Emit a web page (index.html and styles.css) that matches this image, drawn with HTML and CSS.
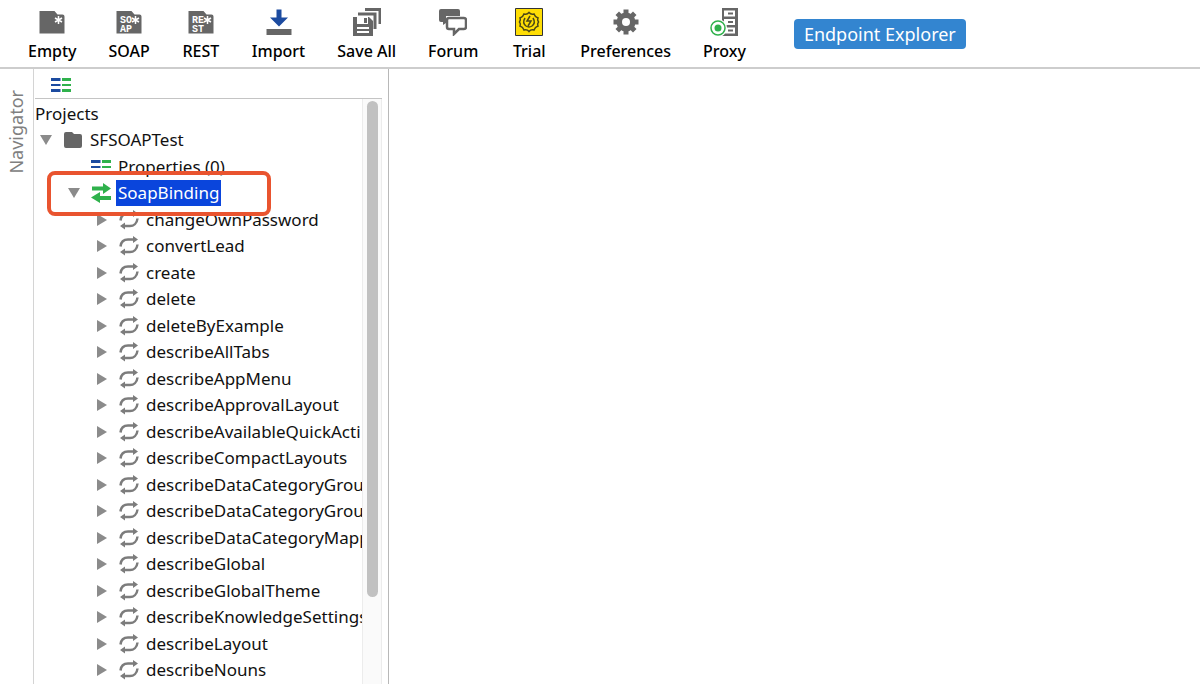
FILE: index.html
```html
<!DOCTYPE html>
<html lang="en">
<head>
<meta charset="utf-8">
<meta name="viewport" content="width=device-width, initial-scale=1">
<title>SFSOAPTest</title>
<link rel="stylesheet" href="styles.css">
</head>
<body>
<svg class="defs" aria-hidden="true">
  <symbol id="i-doc" viewBox="0 0 28 28">
    <path class="gray" d="M1.500 3h15l3 3.500h5q2 0 2 2V25.500h-25z"/>
    <path class="white-line" d="M20.500 8v8M17 10l7 4M17 14l7-4"/>
  </symbol>
  <symbol id="i-props" viewBox="0 0 20 16">
    <path class="navy" d="M0 1h9.500v3H0zM0 7h9.500v2H0zM0 12h9.500v3H0z"/>
    <path class="green" d="M11 1h9v3h-9zM11 7h9v2h-9zM11 12h9v3h-9z"/>
  </symbol>
  <symbol id="i-folder" viewBox="0 0 20 18">
    <path class="gray" d="M1 3q0-2 2-2h6l2 2h6q2 0 2 2v10q0 2-2 2H3q-2 0-2-2z"/>
  </symbol>
  <symbol id="i-binding" viewBox="0 0 20 20">
    <path class="green" d="M1 3.500h11V0l8 5.500-8 5.500V7.500H1zM20 13H9V9L0 14.500 9 20v-3h11z"/>
  </symbol>
  <symbol id="i-op" viewBox="0 0 20 20">
    <path class="op-line" d="M1.500 10.500C2 6 5 3.500 9 3.500h6M18.500 8.500c-.500 5-4 7.500-7.500 7.500H5"/>
    <path class="op-fill" d="M14 0l5 3.500-5 3.500zM6 12.500L1 16l5 3.500z"/>
  </symbol>
  <symbol id="i-open" viewBox="0 0 12 12"><path class="arrow" d="M0 1h12L6 11z"/></symbol>
  <symbol id="i-closed" viewBox="0 0 12 12"><path class="arrow" d="M1 0v12l10-6z"/></symbol>
</svg>

<header class="toolbar">
  <nav class="tools" aria-label="Main toolbar">
    <button class="tool" type="button"><svg class="tool-icon" viewBox="0 0 28 28"><use href="#i-doc"/></svg>Empty</button>
    <button class="tool" type="button"><svg class="tool-icon" viewBox="0 0 28 28"><use href="#i-doc"/><text class="badge" x="5" y="15">SO</text><text class="badge" x="5" y="24">AP</text></svg>SOAP</button>
    <button class="tool" type="button"><svg class="tool-icon" viewBox="0 0 28 28"><use href="#i-doc"/><text class="badge" x="5" y="15">RE</text><text class="badge" x="5" y="24">ST</text></svg>REST</button>
    <button class="tool" type="button"><svg class="tool-icon" viewBox="0 0 28 28"><path class="navy" d="M11.500 1.500h5v8H23l-9 9-9-9h6.500z"/><path class="gray" d="M1.500 21h25v6h-25z"/></svg>Import</button>
    <button class="tool" type="button"><svg class="tool-icon" viewBox="0 0 28 28"><path class="gray-line" d="M5 6h17v15M12 1.500h15V16"/><path class="gray" d="M0 9h16l4 4v15H0z"/><path class="white" d="M4 9h11v7H4zM4 19h12v2H4zM4 23h12v2H4z"/><path class="gray" d="M11 10h3v5h-3z"/></svg>Save All</button>
    <button class="tool" type="button"><svg class="tool-icon" viewBox="0 0 28 28"><path class="gray" d="M2 1h17q2 0 2 2v5H7v7l-3 2v-3H2q-2 0-2-2V3q0-2 2-2z"/><path class="bubble" d="M10 10h15q2 0 2 2v7q0 2-2 2h-5l-5 5v-5h-5q-2 0-2-2v-7q0-2 2-2z"/></svg>Forum</button>
    <button class="tool" type="button"><svg class="tool-icon" viewBox="0 0 28 28"><path class="trial-box" d="M.500.500h27v27H.500z"/><path class="trial-line" d="M14 4.500q2 2.500 5 1.500 1 3 4 4-1 2 .500 4-1.500 2-.500 4-3 1-4 4-3-1-5 1.500-2-2.500-5-1.500-1-3-4-4 1-2-.500-4 1.500-2 .500-4 3-1 4-4 3 1 5-1.500z"/><path class="trial-line" d="M10 10q-3 5 1 8 3 2 6 0 4-3 1-8M15 8l-3 5h4l-3 5"/></svg>Trial</button>
    <button class="tool" type="button"><svg class="tool-icon" viewBox="0 0 28 28"><path class="gray" d="M11.500 1.500h5v4h-5zM11.500 22.500h5v4h-5zM1.500 11.500h4v5h-4zM22.500 11.500h4v5h-4z"/><path class="gray" d="M3.500 7L7 3.500l17.500 17.500L21 24.500zM21 3.500L24.500 7 7 24.500 3.500 21z"/><circle class="gray" cx="14" cy="14" r="9.500"/><circle class="white" cx="14" cy="14" r="4"/></svg>Preferences</button>
    <button class="tool" type="button"><svg class="tool-icon" viewBox="0 0 28 28"><path class="gray" d="M12 0h16v28H12z"/><path class="white" d="M14 2.500h11v6H14zM14 11h11v6H14zM14 19.500h11v6H14z"/><path class="gray" d="M18 4.500h5v2h-5zM18 13h5v2h-5zM18 21.500h5v2h-5z"/><circle class="white" cx="8" cy="20" r="9"/><circle class="proxy-ring" cx="8" cy="20" r="7"/><circle class="green" cx="8" cy="20" r="3.500"/></svg>Proxy</button>
  </nav>
  <button class="endpoint" type="button">Endpoint Explorer</button>
</header>

<div class="workspace">
  <div class="rail"><button class="rail-tab" type="button">Navigator</button></div>
  <aside class="navigator">
    <div class="nav-tools"><button class="plain" type="button" aria-label="Properties"><svg class="props-icon"><use href="#i-props"/></svg></button></div>
    <div class="nav-body">
      <div class="tree">
        <h1 class="tree-title">Projects</h1>
        <ul class="rows">
          <li class="row"><button class="plain" type="button" aria-label="Collapse"><svg class="toggle"><use href="#i-open"/></svg></button><svg class="node-icon"><use href="#i-folder"/></svg><span class="label">SFSOAPTest</span></li>
          <li class="row level-1"><span class="toggle"></span><svg class="node-icon"><use href="#i-props"/></svg><span class="label">Properties (0)</span></li>
          <li class="row level-1 highlighted"><button class="plain" type="button" aria-label="Collapse"><svg class="toggle"><use href="#i-open"/></svg></button><svg class="node-icon"><use href="#i-binding"/></svg><span class="label selected">SoapBinding</span></li>
          <li class="row level-2"><button class="plain" type="button" aria-label="Expand"><svg class="toggle"><use href="#i-closed"/></svg></button><svg class="node-icon"><use href="#i-op"/></svg><span class="label">changeOwnPassword</span></li>
          <li class="row level-2"><button class="plain" type="button" aria-label="Expand"><svg class="toggle"><use href="#i-closed"/></svg></button><svg class="node-icon"><use href="#i-op"/></svg><span class="label">convertLead</span></li>
          <li class="row level-2"><button class="plain" type="button" aria-label="Expand"><svg class="toggle"><use href="#i-closed"/></svg></button><svg class="node-icon"><use href="#i-op"/></svg><span class="label">create</span></li>
          <li class="row level-2"><button class="plain" type="button" aria-label="Expand"><svg class="toggle"><use href="#i-closed"/></svg></button><svg class="node-icon"><use href="#i-op"/></svg><span class="label">delete</span></li>
          <li class="row level-2"><button class="plain" type="button" aria-label="Expand"><svg class="toggle"><use href="#i-closed"/></svg></button><svg class="node-icon"><use href="#i-op"/></svg><span class="label">deleteByExample</span></li>
          <li class="row level-2"><button class="plain" type="button" aria-label="Expand"><svg class="toggle"><use href="#i-closed"/></svg></button><svg class="node-icon"><use href="#i-op"/></svg><span class="label">describeAllTabs</span></li>
          <li class="row level-2"><button class="plain" type="button" aria-label="Expand"><svg class="toggle"><use href="#i-closed"/></svg></button><svg class="node-icon"><use href="#i-op"/></svg><span class="label">describeAppMenu</span></li>
          <li class="row level-2"><button class="plain" type="button" aria-label="Expand"><svg class="toggle"><use href="#i-closed"/></svg></button><svg class="node-icon"><use href="#i-op"/></svg><span class="label">describeApprovalLayout</span></li>
          <li class="row level-2"><button class="plain" type="button" aria-label="Expand"><svg class="toggle"><use href="#i-closed"/></svg></button><svg class="node-icon"><use href="#i-op"/></svg><span class="label">describeAvailableQuickActi</span></li>
          <li class="row level-2"><button class="plain" type="button" aria-label="Expand"><svg class="toggle"><use href="#i-closed"/></svg></button><svg class="node-icon"><use href="#i-op"/></svg><span class="label">describeCompactLayouts</span></li>
          <li class="row level-2"><button class="plain" type="button" aria-label="Expand"><svg class="toggle"><use href="#i-closed"/></svg></button><svg class="node-icon"><use href="#i-op"/></svg><span class="label">describeDataCategoryGrou</span></li>
          <li class="row level-2"><button class="plain" type="button" aria-label="Expand"><svg class="toggle"><use href="#i-closed"/></svg></button><svg class="node-icon"><use href="#i-op"/></svg><span class="label">describeDataCategoryGrou</span></li>
          <li class="row level-2"><button class="plain" type="button" aria-label="Expand"><svg class="toggle"><use href="#i-closed"/></svg></button><svg class="node-icon"><use href="#i-op"/></svg><span class="label">describeDataCategoryMapp</span></li>
          <li class="row level-2"><button class="plain" type="button" aria-label="Expand"><svg class="toggle"><use href="#i-closed"/></svg></button><svg class="node-icon"><use href="#i-op"/></svg><span class="label">describeGlobal</span></li>
          <li class="row level-2"><button class="plain" type="button" aria-label="Expand"><svg class="toggle"><use href="#i-closed"/></svg></button><svg class="node-icon"><use href="#i-op"/></svg><span class="label">describeGlobalTheme</span></li>
          <li class="row level-2"><button class="plain" type="button" aria-label="Expand"><svg class="toggle"><use href="#i-closed"/></svg></button><svg class="node-icon"><use href="#i-op"/></svg><span class="label">describeKnowledgeSettings</span></li>
          <li class="row level-2"><button class="plain" type="button" aria-label="Expand"><svg class="toggle"><use href="#i-closed"/></svg></button><svg class="node-icon"><use href="#i-op"/></svg><span class="label">describeLayout</span></li>
          <li class="row level-2"><button class="plain" type="button" aria-label="Expand"><svg class="toggle"><use href="#i-closed"/></svg></button><svg class="node-icon"><use href="#i-op"/></svg><span class="label">describeNouns</span></li>
        </ul>
      </div>
      <div class="scrollbar"><div class="thumb"></div></div>
    </div>
  </aside>
  <main class="desktop"></main>
</div>
</body>
</html>
```
FILE: styles.css
```css
*, *::after { box-sizing: border-box; }

body {
  margin: 0;
  height: 100vh;
  display: flex;
  flex-direction: column;
  overflow: hidden;
  background: #fff;
  color: #111;
  font-family: "Noto Sans", "Open Sans", sans-serif;
  font-size: 17px;
}

button {
  border: 0;
  padding: 0;
  background: none;
  color: inherit;
  font: inherit;
}

.defs { display: none; }
.plain { display: flex; }

.gray { fill: #666; }
.white { fill: #fff; }
.navy { fill: #1c4ba0; }
.green { fill: #2fb14c; }
.arrow { fill: #8b8b8b; }
.op-fill { fill: #7c7c7c; }
.op-line { fill: none; stroke: #7c7c7c; stroke-width: 2.5; }
.white-line { fill: none; stroke: #fff; stroke-width: 1.5; }
.gray-line { fill: none; stroke: #666; stroke-width: 3; }
.bubble { fill: #fff; stroke: #666; stroke-width: 2.5; }
.trial-box { fill: #ffde05; stroke: #333; }
.trial-line { fill: none; stroke: #4b4618; stroke-width: 1.5; }
.proxy-ring { fill: #fff; stroke: #2fb14c; stroke-width: 1.5; }
.badge {
  fill: #fff;
  font-family: "Liberation Mono", monospace;
  font-size: 10px;
  font-weight: 700;
}

.toolbar {
  flex: none;
  display: flex;
  align-items: flex-start;
  gap: 48px;
  height: 69px;
  padding: 8px 0 0 28px;
  border-bottom: 2px solid #cdcdcd;
}

.tools { display: flex; gap: 32px; }

.tool {
  display: flex;
  flex-direction: column;
  align-items: center;
  gap: 3px;
  min-width: 38px;
  font-size: 16px;
  font-weight: 500;
  line-height: 24px;
  color: #000;
  white-space: nowrap;
}

.tool-icon { width: 28px; height: 28px; }

.endpoint {
  margin-top: 11px;
  height: 30px;
  padding: 0 10px;
  border-radius: 4px;
  background: #3385d0;
  color: #fff;
  font-size: 18px;
  line-height: 30px;
  white-space: nowrap;
}

.workspace { flex: 1; min-height: 0; display: flex; }

.rail {
  flex: none;
  width: 34px;
  padding-top: 21px;
  border-right: 1px solid #d4d4d4;
}

.rail-tab {
  writing-mode: vertical-rl;
  transform: rotate(180deg);
  width: 32px;
  line-height: 32px;
  font-size: 18px;
  color: #808080;
}

.navigator {
  flex: none;
  width: 355px;
  display: flex;
  flex-direction: column;
  padding: 0 6px 0 1px;
  border-right: 1px solid #b8b8b8;
}

.nav-tools {
  flex: none;
  height: 30px;
  padding: 8px 16px;
  border-bottom: 1px solid #c4c4c4;
}

.props-icon { width: 20px; height: 16px; }

.nav-body { flex: 1; min-height: 0; display: flex; }

.tree {
  flex: 1;
  min-width: 0;
  display: flex;
  flex-direction: column;
  overflow: hidden;
  padding-top: 2px;
}

.tree-title {
  flex: none;
  margin: 0;
  font-size: 17px;
  font-weight: 400;
  line-height: 26px;
}

.rows {
  flex: 1;
  display: flex;
  flex-direction: column;
  justify-content: space-between;
  margin: 0;
  padding: 0 0 1px;
  list-style: none;
}

.row {
  flex: none;
  position: relative;
  display: flex;
  align-items: center;
  padding-left: 5px;
  line-height: 26px;
  white-space: nowrap;
}

.level-1 { padding-left: 33px; }
.level-2 { padding-left: 61px; }

.toggle { flex: none; width: 12px; height: 12px; }
.node-icon { flex: none; width: 20px; height: 20px; margin: 0 5px 0 11px; }
.label { padding: 0 2px; }
.selected { background: #0a45dc; color: #fff; }

.highlighted::after {
  content: "";
  position: absolute;
  z-index: 1;
  left: 12px;
  top: -9px;
  width: 224px;
  height: 45px;
  border: 4px solid #e9542f;
  border-radius: 8px;
}

.scrollbar {
  flex: none;
  width: 20px;
  padding: 2px 3px 0 4px;
  background: #fafafa;
  border: solid #ececec;
  border-width: 0 1px;
}

.thumb {
  width: 11px;
  height: 85%;
  border-radius: 6px;
  background: #c1c1c1;
}

.desktop { flex: 1; }
```
